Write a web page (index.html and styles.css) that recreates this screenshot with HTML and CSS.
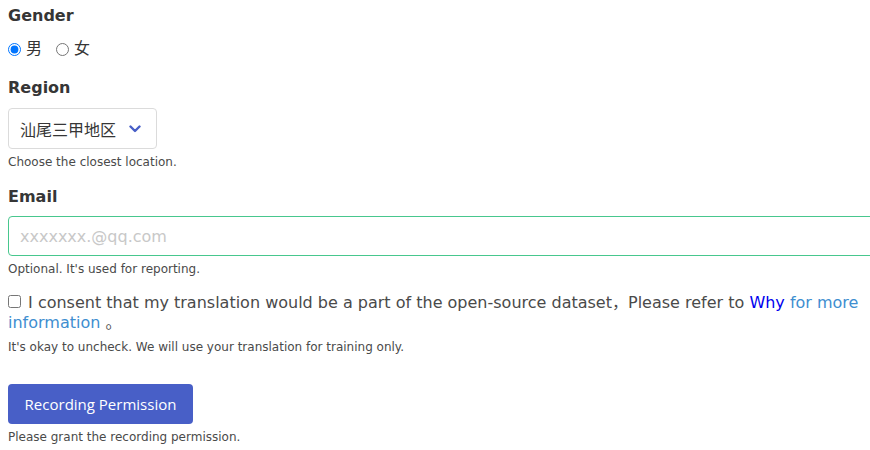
FILE: index.html
```html
<!DOCTYPE html>
<html>
<head>
<meta charset="utf-8">
<link rel="stylesheet" href="styles.css">
</head>
<body>
<div class="form">
  <div class="field">
    <div class="label">Gender</div>
    <div class="radios">
      <label class="radio"><input type="radio" name="g" checked> 男</label>
      <label class="radio"><input type="radio" name="g"> 女</label>
    </div>
  </div>
  <div class="field">
    <div class="label">Region</div>
    <div class="select">
      <span class="select-text">汕尾三甲地区</span>
      <svg class="chev" width="12" height="8" viewBox="0 0 12 8"><path d="M1.5 1.5 L6 6 L10.5 1.5" fill="none" stroke="#485fc7" stroke-width="2.4" stroke-linecap="round" stroke-linejoin="round"/></svg>
    </div>
    <p class="help">Choose the closest location.</p>
  </div>
  <div class="field">
    <div class="label">Email</div>
    <input class="input" type="text" placeholder="xxxxxxx.@qq.com">
    <p class="help">Optional. It's used for reporting.</p>
  </div>
  <div class="field consent">
    <label class="check"><input type="checkbox"> I consent that my translation would be a part of the open-source dataset<span class="cjk">，</span>Please refer to <a class="why" href="#">Why</a> <span class="more">for more information</span> <span class="cjk">。</span></label>
    <p class="help help-consent">It's okay to uncheck. We will use your translation for training only.</p>
  </div>
  <div class="field">
    <button class="button">Recording Permission</button>
    <p class="help">Please grant the recording permission.</p>
  </div>
</div>
</body>
</html>
```
FILE: styles.css
```css
html, body { margin: 0; padding: 0; background: #fff; }
body {
  font-family: "DejaVu Sans", Verdana, sans-serif;
  color: #4a4a4a;
  overflow: hidden;
}
.form { padding: 0 0 0 8px; width: 900px; display: flex; flex-direction: column; }
.field { margin: 0 0 11px; }
.label {
  font-weight: bold;
  font-size: 16px;
  color: #363636;
  line-height: 24px;
  padding-top: 4px;
}
.radios { display: flex; gap: 14px; margin-top: 9px; font-size: 16px; line-height: 24px; font-family: "DejaVu Sans", "Noto Sans CJK SC", sans-serif; color: #363636; }
.radio { display: flex; align-items: center; }
.radio input { margin: 0 5px 0 0; width: 13px; height: 13px; }
.select {
  margin-top: 8px;
  box-sizing: border-box;
  width: 149px;
  height: 41px;
  border: 1px solid #dbdbdb;
  border-radius: 4px;
  display: flex;
  align-items: center;
  padding-left: 11px;
  gap: 13px;
}
.select-text { font-family: "Noto Sans CJK SC", sans-serif; font-size: 16px; color: #363636; }
.chev { display: block; }
.help { margin: 5px 0 0; font-size: 12px; line-height: 16px; color: #4a4a4a; }
.input {
  display: block;
  margin-top: 7px;
  box-sizing: border-box;
  width: 900px;
  height: 40px;
  border: 1px solid #48c78e;
  border-radius: 4px;
  padding: 0 11px;
  font-size: 16px;
  font-family: "DejaVu Sans", sans-serif;
  outline: none;
}
.input::placeholder { color: #c8c8c8; }
.consent { margin-top: 5px; }
.check { font-size: 16px; line-height: 20px; color: #4a4a4a; display: block; width: 862px; }
.check input { margin: 0 2px 0 0; width: 13px; height: 13px; vertical-align: 0px; }
.cjk { font-family: "Noto Sans CJK SC", sans-serif; line-height: 0; }
.why { color: #0000ee; text-decoration: none; }
.more { color: #3e8ed0; }
.help-consent { margin-top: 6px; }
.button {
  margin-top: 18px;
  background: #485fc7;
  color: #fff;
  border: none;
  border-radius: 4px;
  height: 40px;
  width: 185px;
  font-family: "Open Sans", "Noto Sans", sans-serif;
  font-size: 15px;
  padding: 0;
  display: block;
}
.button + .help { margin-top: 5px; }
```
